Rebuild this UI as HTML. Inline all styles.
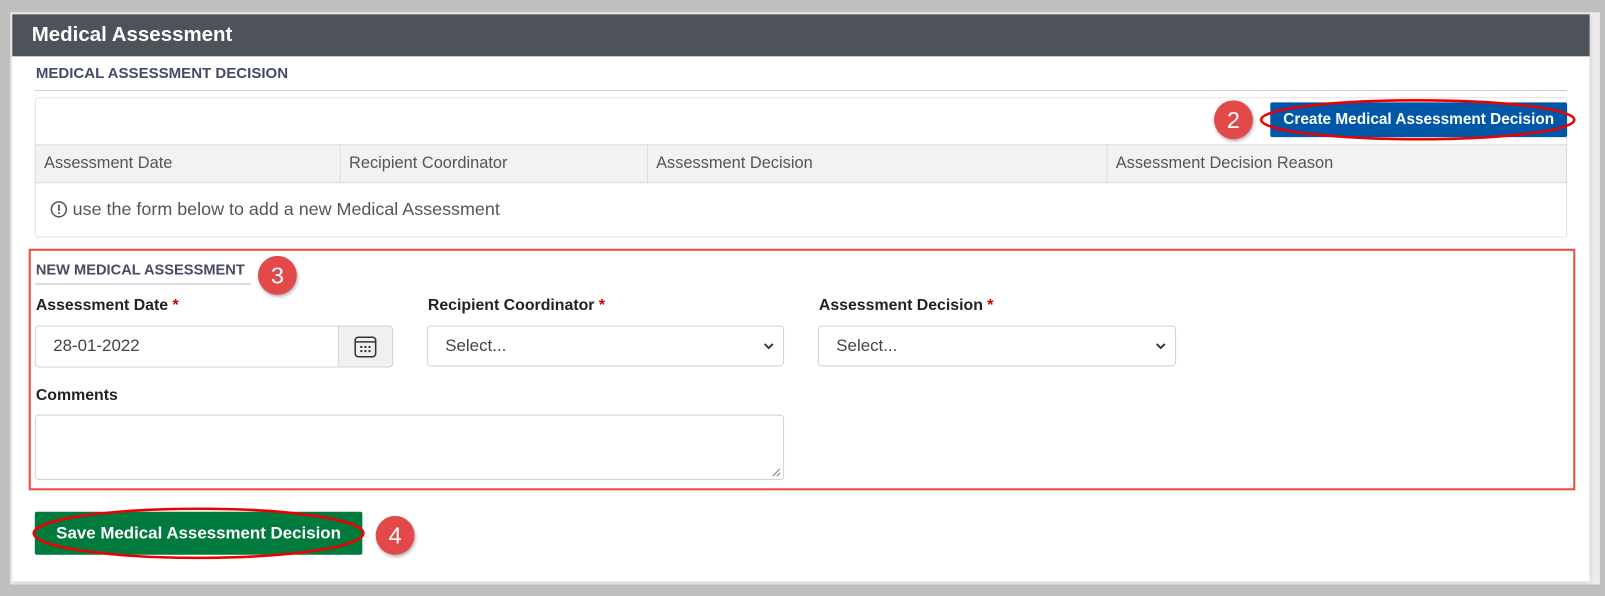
<!DOCTYPE html>
<html><head><meta charset="utf-8"><style>
*{box-sizing:border-box;margin:0;padding:0}
html,body{width:1605px;height:596px;overflow:hidden;background:#bfbfbf;font-family:"Liberation Sans",sans-serif}
#w{position:absolute;left:0;top:0;width:1568px;height:582px;transform:scale(1.02360);transform-origin:0 0}
.a{position:absolute}
.light{left:10px;top:12px;width:1553px;height:559px;background:#ececec}
.card{left:12px;top:14px;width:1541px;height:554px;background:#fff;box-shadow:1px 1px 4px rgba(0,0,0,.15)}
.hdr{left:12px;top:14px;width:1541px;height:41px;background:#4e535b;color:#fff;font-weight:bold;font-size:20px;line-height:41px;padding-left:19px}
.sec{font-weight:bold;font-size:14.7px;color:#454a66}
.tb{left:34px;top:95px;width:1497px;height:137px;border:1px solid #e2e2e2;border-radius:3px}
.th{top:141px;height:38px;background:#f2f2f2;border:1px solid #dcdcdc;border-left:none;font-size:16px;color:#555;line-height:36px;padding-left:8px}
.btn{color:#fff;font-weight:bold;text-align:center;border-radius:2px;white-space:nowrap}
.circ{width:38px;height:38px;border-radius:50%;background:#e24a4a;color:#fff;font-size:23px;text-align:center;line-height:38px;box-shadow:1px 2px 3px rgba(0,0,0,.3)}
.lbl{font-weight:bold;font-size:15.5px;color:#222}
.lbl b{color:#c00}
.inp{border:1px solid #cfd3d8;border-radius:4px;background:#fff;font-size:16.5px;color:#444;padding-left:17px}
.chev{position:absolute;right:8px;top:13px}
</style></head><body><div id="w">
<div class="a light"></div>
<div class="a card"></div>
<div class="a hdr">Medical Assessment</div>
<div class="a sec" style="left:35px;top:64px">MEDICAL ASSESSMENT DECISION</div>
<div class="a" style="left:34px;top:88px;width:1497px;height:1px;background:#c8ccd4"></div>
<div class="a tb"></div>
<div class="a btn" style="left:1241px;top:100px;width:290px;height:34px;background:#0057a8;font-size:15px;line-height:34px">Create Medical Assessment Decision</div>
<div class="a circ" style="left:1186px;top:98px">2</div>
<svg class="a" style="left:1225px;top:94px" width="320" height="46"><ellipse cx="160" cy="23" rx="153" ry="19" fill="none" stroke="#e00" stroke-width="2.5"/></svg>
<div class="a th" style="left:34px;width:299px;border-left:1px solid #dcdcdc">Assessment Date</div>
<div class="a th" style="left:333px;width:300px">Recipient Coordinator</div>
<div class="a th" style="left:633px;width:449px">Assessment Decision</div>
<div class="a th" style="left:1082px;width:449px">Assessment Decision Reason</div>
<div class="a" style="left:49px;top:194px;font-size:17.5px;color:#555;display:flex;align-items:center"><svg width="17" height="17" style="margin-right:5px"><circle cx="8.5" cy="8.5" r="7.3" fill="none" stroke="#555" stroke-width="1.5"/><rect x="7.7" y="4" width="1.7" height="6" fill="#555"/><rect x="7.7" y="11.3" width="1.7" height="1.7" fill="#555"/></svg>use the form below to add a new Medical Assessment</div>
<div class="a" style="left:28px;top:243px;width:1511px;height:236px;border:2px solid #ec4a44"></div>
<div class="a sec" style="left:35px;top:256px;font-size:14.3px">NEW MEDICAL ASSESSMENT</div>
<div class="a" style="left:34px;top:277px;width:211px;height:1px;background:#b8bcc6"></div>
<div class="a circ" style="left:252px;top:250px">3</div>
<div class="a lbl" style="left:35px;top:290px">Assessment Date <b>*</b></div>
<div class="a lbl" style="left:418px;top:290px">Recipient Coordinator <b>*</b></div>
<div class="a lbl" style="left:800px;top:290px">Assessment Decision <b>*</b></div>
<div class="a inp" style="left:34px;top:318px;width:350px;height:41px;line-height:39px">28-01-2022</div>
<div class="a" style="left:330px;top:318px;width:54px;height:41px;background:#f0f0f0;border:1px solid #cfd3d8;border-radius:0 4px 4px 0"><svg style="position:absolute;left:15px;top:9px" width="22" height="22"><rect x="1" y="1.5" width="20" height="19" rx="3" fill="none" stroke="#333" stroke-width="1.5"/><line x1="1" y1="6" x2="21" y2="6" stroke="#333" stroke-width="1.5"/><g fill="#333"><rect x="6" y="10" width="2" height="2"/><rect x="10" y="10" width="2" height="2"/><rect x="14" y="10" width="2" height="2"/><rect x="6" y="14" width="2" height="2"/><rect x="10" y="14" width="2" height="2"/><rect x="14" y="14" width="2" height="2"/></g></svg></div>
<div class="a inp" style="left:417px;top:318px;width:349px;height:40px;line-height:38px">Select...<svg class="chev" width="12" height="12"><path d="M2 4l4 4 4-4" fill="none" stroke="#333" stroke-width="1.8"/></svg></div>
<div class="a inp" style="left:799px;top:318px;width:350px;height:40px;line-height:38px">Select...<svg class="chev" width="12" height="12"><path d="M2 4l4 4 4-4" fill="none" stroke="#333" stroke-width="1.8"/></svg></div>
<div class="a lbl" style="left:35px;top:378px">Comments</div>
<div class="a inp" style="left:34px;top:405px;width:732px;height:64px"><svg style="position:absolute;right:2px;bottom:2px" width="10" height="10"><path d="M9 2L2 9M9 6L6 9" stroke="#777" stroke-width="1"/></svg></div>
<div class="a btn" style="left:34px;top:500px;width:320px;height:42px;background:#007a3d;font-size:16.5px;line-height:42px">Save Medical Assessment Decision</div>
<svg class="a" style="left:14px;top:492px" width="360" height="58"><ellipse cx="180" cy="29" rx="161" ry="24" fill="none" stroke="#e00" stroke-width="2.5"/></svg>
<div class="a circ" style="left:367px;top:504px">4</div>
</div></body></html>
